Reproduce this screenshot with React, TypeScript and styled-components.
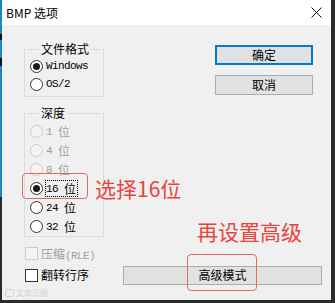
import React from "react";
import styled, { createGlobalStyle } from "styled-components";

const Global = createGlobalStyle`
  html, body { margin: 0; padding: 0; overflow: hidden; }
  * { box-sizing: border-box; }
`;

const CJK = `"Noto Sans CJK SC", "Noto Sans", sans-serif`;
const MONO = `"Liberation Mono", "DejaVu Sans Mono", monospace`;

const Frame = styled.div`
  width: 335px;
  height: 303px;
  display: flex;
  padding: 0 4px 3px 2px;
  background:
    linear-gradient(to bottom, #1a86cc 0, #1a86cc 34px, #0c0c0c 34px, #0c0c0c 40px,
      #1a86cc 40px, #1a86cc 58px, #0c0c0c 58px, #0c0c0c 66px, #1a86cc 66px,
      #1a86cc 197px, #2a2a2a 197px) left top / 2px 100% no-repeat,
    #2b2b2b;
`;

const Window = styled.div`
  position: relative;
  flex: 1;
  display: flex;
  flex-direction: column;
  background: #f0f0f0;
  font-family: ${CJK};
  font-size: 12px;
  color: #000;
`;

const TitleBar = styled.div`
  height: 25px;
  flex: none;
  background: #ffffff;
  display: flex;
  align-items: center;
  justify-content: space-between;
  padding: 0 9px 0 4px;
  font-size: 12px;
  line-height: 14px;
`;

const Body = styled.div`
  flex: 1;
  display: flex;
  flex-direction: column;
`;

const TopArea = styled.div`
  display: flex;
`;

const LeftCol = styled.div`
  width: 102px;
  padding: 24px 0 0 22px;
  display: flex;
  flex-direction: column;
  gap: 16px;
`;

const RightCol = styled.div`
  margin-left: 111px;
  padding-top: 20px;
  display: flex;
  flex-direction: column;
  gap: 10px;
`;

const Group = styled.div<{ $pt: number; $pb: number }>`
  position: relative;
  width: 80px;
  border: 1px solid #dcdcdc;
  padding: ${(p) => p.$pt}px 0 ${(p) => p.$pb}px 5px;
  display: flex;
  flex-direction: column;
`;

const GroupTitle = styled.span`
  position: absolute;
  left: 14px;
  top: -8px;
  padding: 0 2px;
  background: #f0f0f0;
  font-size: 12px;
  line-height: 14px;
`;

const RadioRow = styled.div<{ $h: number; $disabled?: boolean }>`
  height: ${(p) => p.$h}px;
  display: flex;
  align-items: center;
  gap: 3px;
  color: ${(p) => (p.$disabled ? "#a0a0a0" : "#000")};
`;

const RadioCircle = styled.span<{ $checked?: boolean; $disabled?: boolean }>`
  width: 13px;
  height: 13px;
  border-radius: 50%;
  border: 1px solid ${(p) => (p.$disabled ? "#cccccc" : "#333333")};
  background: ${(p) => (p.$disabled ? "#f4f4f4" : "#ffffff")};
  display: flex;
  align-items: center;
  justify-content: center;
  flex: none;
  &::after {
    content: "";
    width: 7px;
    height: 7px;
    border-radius: 50%;
    background: #1a1a1a;
    display: ${(p) => (p.$checked ? "block" : "none")};
  }
`;

const Label = styled.span<{ $focus?: boolean }>`
  display: inline-flex;
  align-items: center;
  height: 15px;
  padding: 0 1px 0 0;
  outline: ${(p) => (p.$focus ? "1px dotted #000" : "none")};
  outline-offset: 0;
`;

const Mono = styled.span`
  font-family: ${MONO};
  font-size: 11px;
  letter-spacing: -0.6px;
  line-height: 12px;
  white-space: pre;
`;

const Han = styled.span`
  font-family: ${CJK};
  font-size: 12px;
  line-height: 14px;
`;

const Button = styled.div<{ $default?: boolean; $w: number; $h: number }>`
  width: ${(p) => p.$w}px;
  height: ${(p) => p.$h}px;
  background: #e1e1e1;
  border: ${(p) => (p.$default ? "2px solid #0078d7" : "1px solid #adadad")};
  display: flex;
  align-items: center;
  justify-content: center;
  font-size: 12px;
  line-height: 14px;
`;

const BottomArea = styled.div`
  margin-top: 7px;
  display: flex;
  flex-direction: column;
  gap: 3px;
`;

const BottomRow = styled.div<{ $h: number }>`
  height: ${(p) => p.$h}px;
  display: flex;
  align-items: center;
  padding-left: 23px;
`;

const CheckItem = styled.div<{ $disabled?: boolean }>`
  width: 98px;
  display: flex;
  align-items: center;
  gap: 3px;
  color: ${(p) => (p.$disabled ? "#a0a0a0" : "#000")};
`;

const CheckBox = styled.span<{ $disabled?: boolean }>`
  width: 13px;
  height: 13px;
  flex: none;
  border: 1px solid ${(p) => (p.$disabled ? "#cccccc" : "#333333")};
  background: ${(p) => (p.$disabled ? "#f4f4f4" : "#ffffff")};
`;

const Mark = styled.div<{ $x: number; $y: number; $w: number; $h: number }>`
  position: absolute;
  left: ${(p) => p.$x}px;
  top: ${(p) => p.$y}px;
  width: ${(p) => p.$w}px;
  height: ${(p) => p.$h}px;
  border: 1.5px solid #e26a64;
  border-radius: 4px;
  pointer-events: none;
`;

const Note = styled.div<{ $x: number; $y: number }>`
  position: absolute;
  left: ${(p) => p.$x}px;
  top: ${(p) => p.$y}px;
  color: #e8433c;
  font-family: ${CJK};
  font-size: 21px;
  line-height: 24px;
  white-space: nowrap;
`;

const Watermark = styled.div`
  position: absolute;
  left: 3px;
  bottom: 3px;
  display: flex;
  align-items: center;
  gap: 2px;
  color: #d2d2d2;
  font-size: 8px;
  line-height: 9px;
`;

const depths = [
  { n: "1", disabled: true },
  { n: "4", disabled: true },
  { n: "8", disabled: true },
  { n: "16", checked: true, focus: true },
  { n: "24" },
  { n: "32" },
];

export default function App() {
  return (
    <>
      <Global />
      <Frame>
        <Window>
          <TitleBar>
            <span>BMP 选项</span>
            <svg width="11" height="11" viewBox="0 0 11 11">
              <path d="M0.5 0.5 L10.5 10.5 M10.5 0.5 L0.5 10.5" stroke="#111" strokeWidth="1" />
            </svg>
          </TitleBar>
          <Body>
            <TopArea>
              <LeftCol>
                <Group $pt={7} $pb={3}>
                  <GroupTitle>文件格式</GroupTitle>
                  <RadioRow $h={18}>
                    <RadioCircle $checked />
                    <Label>
                      <Mono>Windows</Mono>
                    </Label>
                  </RadioRow>
                  <RadioRow $h={18}>
                    <RadioCircle />
                    <Label>
                      <Mono>OS/2</Mono>
                    </Label>
                  </RadioRow>
                </Group>
                <Group $pt={8} $pb={0}>
                  <GroupTitle>深度</GroupTitle>
                  {depths.map((d) => (
                    <RadioRow key={d.n} $h={19} $disabled={d.disabled}>
                      <RadioCircle $checked={d.checked} $disabled={d.disabled} />
                      <Label $focus={d.focus}>
                        <Mono>{d.n + " "}</Mono>
                        <Han>位</Han>
                      </Label>
                    </RadioRow>
                  ))}
                </Group>
              </LeftCol>
              <RightCol>
                <Button $default $w={98} $h={20}>确定</Button>
                <Button $w={98} $h={20}>取消</Button>
              </RightCol>
            </TopArea>
            <BottomArea>
              <BottomRow $h={18}>
                <CheckItem $disabled>
                  <CheckBox $disabled />
                  <span>
                    <Han>压缩</Han>
                    <Mono>(RLE)</Mono>
                  </span>
                </CheckItem>
              </BottomRow>
              <BottomRow $h={20}>
                <CheckItem>
                  <CheckBox />
                  <Han>翻转行序</Han>
                </CheckItem>
                <Button $w={199} $h={19}>高级模式</Button>
              </BottomRow>
            </BottomArea>
          </Body>
          <Mark $x={20} $y={173} $w={66} $h={26} />
          <Note $x={93} $y={176}>选择16位</Note>
          <Note $x={195} $y={219}>再设置高级</Note>
          <Mark $x={185} $y={254} $w={70} $h={37} />
          <Watermark>
            <svg width="9" height="8" viewBox="0 0 9 8">
              <rect x="0.5" y="0.5" width="8" height="7" rx="1.5" fill="none" stroke="#d2d2d2" />
            </svg>
            <span>文库识图</span>
          </Watermark>
        </Window>
      </Frame>
    </>
  );
}
